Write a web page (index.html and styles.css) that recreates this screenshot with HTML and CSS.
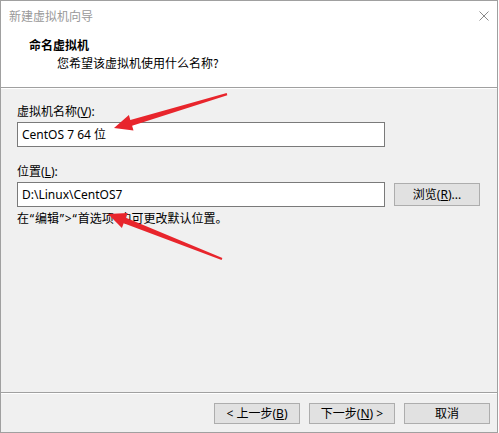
FILE: index.html
```html
<!DOCTYPE html>
<html lang="zh-CN">
<head>
<meta charset="utf-8">
<title>新建虚拟机向导</title>
<link rel="stylesheet" href="styles.css">
</head>
<body>
<div class="window">
  <div class="titlebar">
    <span class="title">新建虚拟机向导</span>
    <svg class="close" width="10" height="10" viewBox="0 0 10 10"><path d="M0.5 0.5 L9.5 9.5 M9.5 0.5 L0.5 9.5" stroke="#8a8a8a" stroke-width="1" fill="none"/></svg>
  </div>
  <div class="header">
    <div class="heading">命名虚拟机</div>
    <div class="subtitle">您希望该虚拟机使用什么名称?</div>
  </div>
  <div class="sep"></div>
  <div class="content">
    <div class="label">虚拟机名称(<u>V</u>):</div>
    <div class="input wide">CentOS 7 64 位</div>
    <div class="label second">位置(<u>L</u>):</div>
    <div class="row">
      <div class="input wide">D:\Linux\CentOS7</div>
      <div class="btn browse">浏览(<u>R</u>)...</div>
    </div>
    <div class="hint">在<span class="q">“</span>编辑<span class="q">”</span>&gt;<span class="q">“</span>首选项<span class="q">”</span>中可更改默认位置。</div>
  </div>
  <div class="sep"></div>
  <div class="footer">
    <div class="btn">&lt; 上一步(<u>B</u>)</div>
    <div class="btn">下一步(<u>N</u>) &gt;</div>
    <div class="btn">取消</div>
  </div>
  <svg class="arrows" width="499" height="433" viewBox="0 0 499 433">
    <polygon fill="#e8252c" points="114,128 128.9,115.1 130.3,119.9 226.7,93 227.3,95.2 132.1,125.7 133.5,130.5"/>
    <polygon fill="#e8252c" points="108,214 127.7,213 125.9,217.7 222.4,258.1 221.6,259.9 123.7,223.3 121.9,228"/>
  </svg>
</div>
</body>
</html>
```

FILE: styles.css
```css
html, body {
  margin: 0;
  padding: 0;
  background: #ffffff;
}

body {
  font-family: "Noto Sans", "Noto Sans CJK SC", sans-serif;
  font-size: 12px;
  color: #000;
}

.window {
  position: relative;
  width: 498px;
  height: 433px;
  box-sizing: border-box;
  border: 1px solid #a0a0a0;
  background: #f0f0f0;
  display: flex;
  flex-direction: column;
  overflow: hidden;
}

.titlebar {
  height: 29px;
  flex: none;
  background: #fff;
  display: flex;
  align-items: center;
  justify-content: space-between;
  padding: 0 8px 0 8px;
  box-sizing: border-box;
}

.title {
  color: #999;
  font-family: "Noto Sans CJK SC", sans-serif;
  font-size: 12px;
  line-height: 16px;
}

.close {
  display: block;
}

.header {
  flex: none;
  background: #fff;
  height: 57px;
  box-sizing: border-box;
  padding: 7px 0 0 28px;
}

.heading {
  font-family: "Noto Sans CJK SC", sans-serif;
  font-weight: bold;
  line-height: 16px;
}

.subtitle {
  font-family: "Noto Sans CJK SC", sans-serif;
  line-height: 16px;
  margin: 2px 0 0 28px;
}

.sep {
  flex: none;
  height: 1px;
  background: #a0a0a0;
  border-bottom: 1px solid #fff;
}

.content {
  flex: 1;
  padding: 15px 0 0 16px;
}

.label {
  line-height: 16px;
  margin-bottom: 2px;
}

.label.second {
  margin-top: 17px;
}

.input {
  height: 25px;
  box-sizing: border-box;
  border: 1px solid #7a7a7a;
  background: #fff;
  padding: 0 4px;
  line-height: 23px;
  white-space: nowrap;
}

.wide {
  width: 368px;
}

.row {
  display: flex;
  align-items: center;
  gap: 9px;
}

.btn {
  width: 86px;
  height: 21px;
  box-sizing: border-box;
  border: 1px solid #adadad;
  background: #e1e1e1;
  text-align: center;
  line-height: 19px;
  white-space: nowrap;
}

.btn.browse {
  height: 23px;
  line-height: 21px;
}

.hint {
  margin-top: 4px;
  line-height: 16px;
  white-space: nowrap;
}

.q {
  margin: 0 0.8px;
}

.footer {
  flex: none;
  height: 38px;
  box-sizing: border-box;
  padding: 9px 7px 0 0;
  display: flex;
  justify-content: flex-end;
  gap: 9px;
}

u {
  text-decoration: underline;
  text-underline-offset: 1px;
}

.arrows {
  position: absolute;
  left: -1px;
  top: -1px;
  pointer-events: none;
}
```
